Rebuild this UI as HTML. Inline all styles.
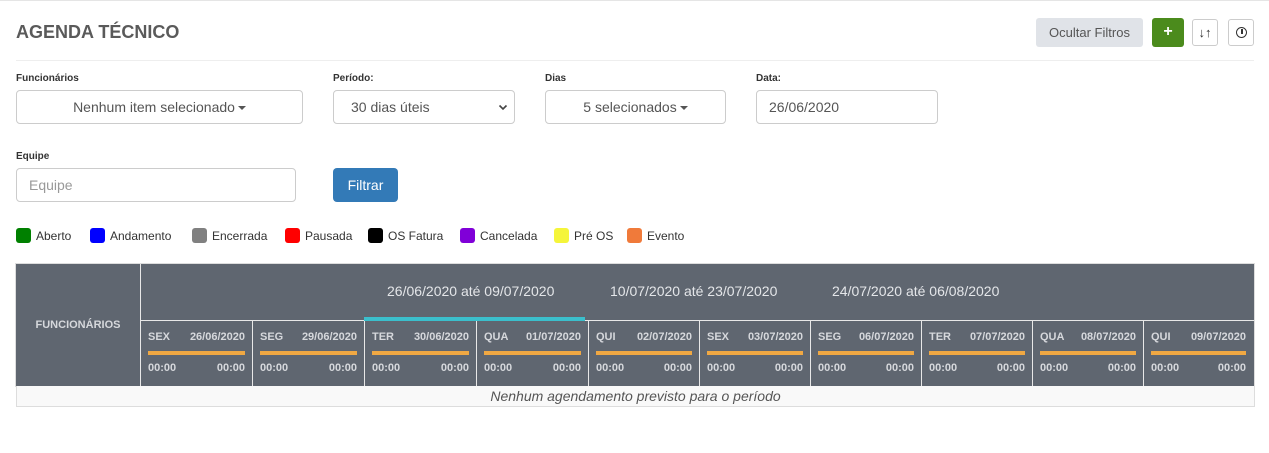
<!DOCTYPE html><html><head><style>
body{margin:0;width:1269px;height:453px;background:#fff;font-family:"Liberation Sans",sans-serif;position:relative;overflow:hidden;color:#555}
.a{position:absolute}
.lbl{font-size:10px;font-weight:bold;color:#333}
.inp{position:absolute;border:1px solid #ccc;border-radius:4px;height:32px;box-sizing:border-box;font-size:14px;color:#555;line-height:30px;background:#fff}
.car{display:inline-block;border-left:4px solid transparent;border-right:4px solid transparent;border-top:4px solid #555;vertical-align:middle;margin-left:3px}
.leg{position:absolute;top:228px;font-size:12px;color:#333;line-height:16px}
.leg i{display:inline-block;width:15px;height:15px;border-radius:3px;vertical-align:-3px;margin-right:5px}
.th{background:#5f6670;color:#dfe1e4}
.day{position:absolute;top:321px;height:65px;border-left:1px solid #e8e8e8;box-sizing:border-box;font-size:11px;font-weight:bold;color:#d6d8dc}
.day .t{position:absolute;top:10px;left:7px;right:8px}
.day .t span{float:right}
.day .b{position:absolute;top:30px;left:7px;right:8px;height:4px;background:#f0a843}
.day .h{position:absolute;top:41px;left:7px;right:8px}
.day .h span{float:right}
</style></head><body>
<div class="a" style="left:0;top:0;width:1269px;border-top:1px solid #e5e5e5"></div>
<div class="a" style="left:16px;top:22px;font-size:18px;font-weight:bold;color:#5a5a5a">AGENDA TÉCNICO</div>
<div class="a" style="left:1036px;top:18px;width:107px;height:29px;background:#e0e3e8;border-radius:3px;font-size:13px;color:#555;text-align:center;line-height:29px">Ocultar Filtros</div>
<div class="a" style="left:1152px;top:18px;width:32px;height:29px;background:#4b8b1c;border-radius:3px;color:#fff;font-weight:bold;font-size:16px;text-align:center;line-height:28px">+</div>
<div class="a" style="left:1192px;top:19px;width:26px;height:27px;border:1px solid #ccc;border-radius:3px;box-sizing:border-box;text-align:center;font-size:13px;line-height:25px;color:#333;font-weight:bold">↓↑</div>
<div class="a" style="left:1228px;top:19px;width:26px;height:27px;border:1px solid #ccc;border-radius:3px;box-sizing:border-box"><div style="position:absolute;left:7px;top:7px;width:9px;height:9px;border:1.5px solid #333;border-radius:50%"></div><div style="position:absolute;left:12px;top:9px;width:1.5px;height:5px;background:#333"></div></div>
<div class="a" style="left:16px;top:60px;width:1238px;border-top:1px solid #eee"></div>
<div class="a lbl" style="left:16px;top:73px">Funcionários</div>
<div class="a lbl" style="left:333px;top:73px">Período:</div>
<div class="a lbl" style="left:545px;top:73px">Dias</div>
<div class="a lbl" style="left:756px;top:73px">Data:</div>
<div class="inp" style="left:16px;top:90px;width:287px;height:34px;text-align:center;line-height:32px">Nenhum item selecionado<span class="car"></span></div>
<div class="inp" style="left:333px;top:90px;width:182px;height:34px;padding-left:17px;line-height:32px">30 dias úteis<svg style="position:absolute;right:6px;top:13px" width="10" height="7" viewBox="0 0 10 7"><path d="M1.5 1.5L5 5L8.5 1.5" fill="none" stroke="#444" stroke-width="1.6"/></svg></div>
<div class="inp" style="left:545px;top:90px;width:181px;height:34px;text-align:center;line-height:32px">5 selecionados<span class="car"></span></div>
<div class="inp" style="left:756px;top:90px;width:182px;height:34px;padding-left:12px;line-height:32px">26/06/2020</div>
<div class="a lbl" style="left:16px;top:151px">Equipe</div>
<div class="inp" style="left:16px;top:168px;width:280px;height:34px;padding-left:12px;line-height:32px;color:#999">Equipe</div>
<div class="a" style="left:333px;top:168px;width:65px;height:34px;background:#337ab7;border-radius:4px;color:#fff;font-size:14px;text-align:center;line-height:34px">Filtrar</div>
<div class="leg" style="left:16px"><i style="background:#008000"></i>Aberto</div>
<div class="leg" style="left:90px"><i style="background:#0000ff"></i>Andamento</div>
<div class="leg" style="left:192px"><i style="background:#808080"></i>Encerrada</div>
<div class="leg" style="left:285px"><i style="background:#ff0000"></i>Pausada</div>
<div class="leg" style="left:368px"><i style="background:#000"></i>OS Fatura</div>
<div class="leg" style="left:460px"><i style="background:#8000d8"></i>Cancelada</div>
<div class="leg" style="left:554px"><i style="background:#f5f53a"></i>Pré OS</div>
<div class="leg" style="left:627px"><i style="background:#f07a3a"></i>Evento</div>
<div class="a th" style="left:16px;top:264px;width:1238px;height:122px;outline:1px solid #ddd"></div>
<div class="a" style="left:140px;top:264px;width:1px;height:122px;background:#e8e8e8"></div>
<div class="a" style="left:141px;top:320px;width:1113px;height:1px;background:#e8e8e8"></div>
<div class="a" style="left:16px;top:319px;width:124px;text-align:center;font-size:11px;font-weight:bold;color:#d6d8dc">FUNCIONÁRIOS</div>
<div class="a" style="left:387px;top:283px;font-size:14px;color:#e4e6e9">26/06/2020 até 09/07/2020</div>
<div class="a" style="left:610px;top:283px;font-size:14px;color:#e4e6e9">10/07/2020 até 23/07/2020</div>
<div class="a" style="left:832px;top:283px;font-size:14px;color:#e4e6e9">24/07/2020 até 06/08/2020</div>
<div class="a" style="left:364px;top:317px;width:221px;height:4px;background:#3bbfcc"></div>
<div class="day" style="left:140px;width:113px"><div class="t">SEX<span>26/06/2020</span></div><div class="b"></div><div class="h">00:00<span>00:00</span></div></div>
<div class="day" style="left:252px;width:113px"><div class="t">SEG<span>29/06/2020</span></div><div class="b"></div><div class="h">00:00<span>00:00</span></div></div>
<div class="day" style="left:364px;width:113px"><div class="t">TER<span>30/06/2020</span></div><div class="b"></div><div class="h">00:00<span>00:00</span></div></div>
<div class="day" style="left:476px;width:113px"><div class="t">QUA<span>01/07/2020</span></div><div class="b"></div><div class="h">00:00<span>00:00</span></div></div>
<div class="day" style="left:588px;width:112px"><div class="t">QUI<span>02/07/2020</span></div><div class="b"></div><div class="h">00:00<span>00:00</span></div></div>
<div class="day" style="left:699px;width:112px"><div class="t">SEX<span>03/07/2020</span></div><div class="b"></div><div class="h">00:00<span>00:00</span></div></div>
<div class="day" style="left:810px;width:112px"><div class="t">SEG<span>06/07/2020</span></div><div class="b"></div><div class="h">00:00<span>00:00</span></div></div>
<div class="day" style="left:921px;width:112px"><div class="t">TER<span>07/07/2020</span></div><div class="b"></div><div class="h">00:00<span>00:00</span></div></div>
<div class="day" style="left:1032px;width:112px"><div class="t">QUA<span>08/07/2020</span></div><div class="b"></div><div class="h">00:00<span>00:00</span></div></div>
<div class="day" style="left:1143px;width:111px"><div class="t">QUI<span>09/07/2020</span></div><div class="b"></div><div class="h">00:00<span>00:00</span></div></div>
<div class="a" style="left:16px;top:386px;width:1237px;height:20px;background:#f9f9f9;border:1px solid #ddd;border-top:none;text-align:center;font-size:14px;font-style:italic;color:#555;line-height:20px">Nenhum agendamento previsto para o período</div>
</body></html>
